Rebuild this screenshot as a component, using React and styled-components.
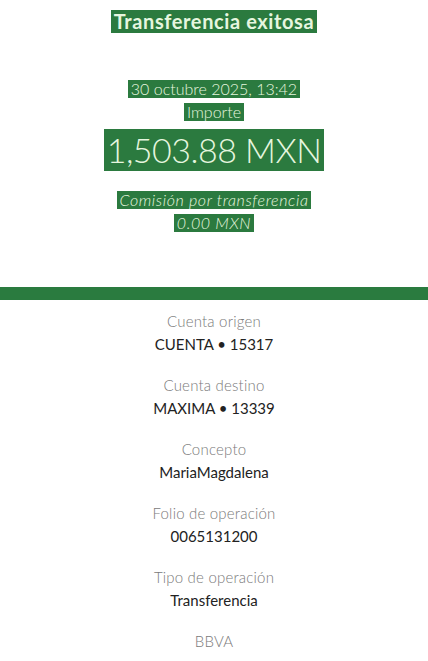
import styled, { createGlobalStyle } from "styled-components";

const GlobalStyle = createGlobalStyle`
  html, body {
    margin: 0;
    padding: 0;
    background: #ffffff;
    font-family: Lato, "Open Sans", sans-serif;
  }
`;

const Page = styled.div`
  width: 428px;
  height: 661px;
  overflow: hidden;
  background: #ffffff;
`;

const Header = styled.div`
  display: flex;
  flex-direction: column;
  align-items: center;
  padding-top: 10px;
  height: 287px;
  box-sizing: border-box;
`;

// text sitting on a green highlight
const Mark = styled.span`
  display: inline-block;
  background: #2b7a3f;
  color: #e6f6df;
  padding: 0 ${(p) => p.$pad || 3}px;
  font-size: ${(p) => p.$size}px;
  line-height: ${(p) => p.$line}px;
  font-weight: ${(p) => p.$weight || 400};
  font-style: ${(p) => (p.$italic ? "italic" : "normal")};
  letter-spacing: ${(p) => p.$spacing || 0}px;
  margin-top: ${(p) => p.$top || 0}px;
  white-space: nowrap;
`;

const Bar = styled.div`
  height: 13px;
  background: #2a7b3f;
`;

const Details = styled.div`
  display: flex;
  flex-direction: column;
  align-items: center;
  padding-top: 11px;
  gap: 21px;
`;

const Item = styled.div`
  display: flex;
  flex-direction: column;
  align-items: center;
  gap: 3px;
`;

const Label = styled.div`
  font-size: 15px;
  line-height: 20px;
  color: #7a7a7a;
  font-weight: 300;
  letter-spacing: 0.2px;
`;

const Value = styled.div`
  font-size: 15px;
  line-height: 20px;
  color: #222222;
`;

const details = [
  ["Cuenta origen", "CUENTA • 15317"],
  ["Cuenta destino", "MAXIMA • 13339"],
  ["Concepto", "MariaMagdalena"],
  ["Folio de operación", "0065131200"],
  ["Tipo de operación", "Transferencia"],
];

const App = () => {
  return (
    <Page>
      <GlobalStyle />
      <Header>
        <Mark $size={20} $line={23} $weight={700} $spacing={0.6}>Transferencia exitosa</Mark>
        <Mark $size={16} $line={18} $weight={300} $top={47}>30 octubre 2025, 13:42</Mark>
        <Mark $size={16} $line={18} $weight={300} $top={5}>Importe</Mark>
        <Mark $size={34} $line={42} $weight={300} $spacing={-0.5} $top={8}>1,503.88 MXN</Mark>
        <Mark $size={16} $line={18} $weight={300} $italic $spacing={0.6} $top={20}>Comisión por transferencia</Mark>
        <Mark $size={16} $line={18} $weight={300} $italic $spacing={0.6} $top={5}>0.00 MXN</Mark>
      </Header>
      <Bar />
      <Details>
        {details.map(([label, value]) => (
          <Item key={label}>
            <Label>{label}</Label>
            <Value>{value}</Value>
          </Item>
        ))}
        <Item>
          <Label>BBVA</Label>
        </Item>
      </Details>
    </Page>
  );
};

export default App;
